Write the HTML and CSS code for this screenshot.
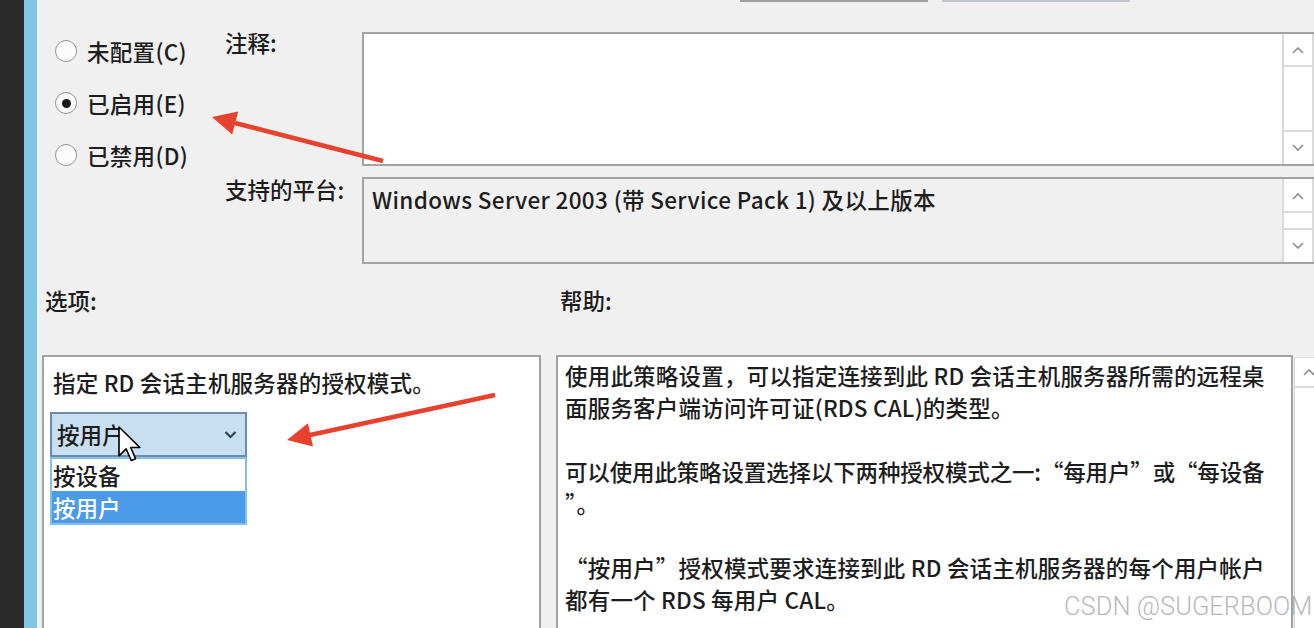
FILE: index.html
```html
<!DOCTYPE html>
<html lang="zh-CN">
<head>
<meta charset="utf-8">
<title>授权模式</title>
<link rel="stylesheet" href="styles.css">
</head>
<body>
<div class="page">
  <div class="edge-dark"></div>
  <div class="edge-blue"></div>
  <main class="dialog">
    <div class="btnbar"><span class="stub stub-a"></span><span class="stub stub-b"></span></div>
    <section class="top">
      <div class="radios">
        <div class="radio"><span class="circle"></span><span class="rlabel">未配置(C)</span></div>
        <div class="radio"><span class="circle on"></span><span class="rlabel">已启用(E)</span></div>
        <div class="radio"><span class="circle"></span><span class="rlabel">已禁用(D)</span></div>
      </div>
      <div class="fields">
        <div class="flabel">注释:</div>
        <div class="box box-comment">
          <div class="box-body"></div>
          <div class="sb sb-comment">
            <div class="sbtn"><svg width="12" height="7" viewBox="0 0 12 7"><polyline points="1,6 6,1 11,6" fill="none" stroke="#8c8c8c" stroke-width="1.6"/></svg></div>
            <div class="track"></div>
            <div class="sbtn"><svg width="12" height="7" viewBox="0 0 12 7"><polyline points="1,1 6,6 11,1" fill="none" stroke="#8c8c8c" stroke-width="1.6"/></svg></div>
          </div>
        </div>
        <div class="flabel flabel-2">支持的平台:</div>
        <div class="box box-platform">
          <div class="box-body ptext">Windows Server 2003 (带 Service Pack 1) 及以上版本</div>
          <div class="sb sb-platform">
            <div class="sbtn"><svg width="12" height="7" viewBox="0 0 12 7"><polyline points="1,6 6,1 11,6" fill="none" stroke="#8c8c8c" stroke-width="1.6"/></svg></div>
            <div class="track"></div>
            <div class="sbtn"><svg width="12" height="7" viewBox="0 0 12 7"><polyline points="1,1 6,6 11,1" fill="none" stroke="#8c8c8c" stroke-width="1.6"/></svg></div>
          </div>
        </div>
      </div>
    </section>
    <section class="bottom">
      <div class="col col-opts">
        <div class="slabel">选项:</div>
        <div class="panel opts">
          <div class="opt-text">指定 RD 会话主机服务器的授权模式。</div>
          <div class="combo"><span>按用户</span><svg width="13" height="9" viewBox="0 0 13 9"><polyline points="1.5,2 6.5,7 11.5,2" fill="none" stroke="#34424f" stroke-width="2.2"/></svg></div>
          <ul class="list">
            <li>按设备</li>
            <li class="sel">按用户</li>
          </ul>
        </div>
      </div>
      <div class="col col-help">
        <div class="slabel">帮助:</div>
        <div class="helpwrap">
          <div class="panel help">
            <p>使用此策略设置，可以指定连接到此 RD 会话主机服务器所需的远程桌</p>
            <p>面服务客户端访问许可证(RDS CAL)的类型。</p>
            <p></p>
            <p class="tight">可以使用此策略设置选择以下两种授权模式之一:“每用户”或“每设备</p>
            <p>”。</p>
            <p></p>
            <p>“按用户”授权模式要求连接到此 RD 会话主机服务器的每个用户帐户</p>
            <p>都有一个 RDS 每用户 CAL。</p>
          </div>
          <div class="hsb">
            <div class="hbtn"><svg width="12" height="7" viewBox="0 0 12 7"><polyline points="1,6 6,1 11,6" fill="none" stroke="#8c8c8c" stroke-width="1.6"/></svg></div>
          </div>
        </div>
      </div>
    </section>
  </main>
  <svg class="overlay" width="1314" height="628" viewBox="0 0 1314 628">
    <line x1="383" y1="161" x2="235" y2="123" stroke="#e8412d" stroke-width="4.5"/>
    <polygon points="212,117 238.2,111.4 232.2,134.6" fill="#e8412d"/>
    <line x1="495" y1="395" x2="310" y2="435" stroke="#e8412d" stroke-width="4.5"/>
    <polygon points="287,440 307.9,423.2 313,446.6" fill="#e8412d"/>
    <g transform="translate(119 427) scale(1.8)">
      <path d="M0 0 L0 16 L4 12.2 L6.8 18.6 L9.2 17.6 L6.5 11.4 L11.6 11.4 Z" fill="#fff" stroke="#000" stroke-width="0.9" stroke-linejoin="round"/>
    </g>
  </svg>
  <div class="watermark">CSDN @SUGERBOOM</div>
</div>
</body>
</html>
```
FILE: styles.css
```css
* { box-sizing: border-box; margin: 0; padding: 0; }
html, body { width: 1314px; height: 628px; overflow: hidden; }
body {
  font-family: "Noto Sans CJK SC", "Noto Sans", sans-serif;
  font-size: 22.5px;
  font-weight: 500;
  color: #1d1d1d;
  background: #f0f0f0;
}
.page { position: relative; display: flex; width: 1314px; height: 628px; overflow: hidden; }
.edge-dark { flex: 0 0 24px; background: #2b2b2b; }
.edge-blue { flex: 0 0 13px; background: #7fc6e4; }
.dialog { flex: 0 0 1300px; background: #f0f0f0; }

.btnbar { display: flex; gap: 14px; padding-left: 703px; height: 2px; }
.stub { width: 188px; height: 2px; }
.stub-a { background: #9f9f9f; }
.stub-b { background: #c3c7cc; }

.top { display: flex; }
.radios { width: 188px; padding-top: 23px; }
.radio { height: 52px; display: flex; align-items: center; gap: 10px; padding-left: 18px; line-height: 24px; }
.rlabel { letter-spacing: 0.3px; }
.circle {
  width: 22px; height: 22px; border: 1.5px solid #939393; border-radius: 50%;
  background: #fcfcfc; display: flex; align-items: center; justify-content: center;
}
.circle.on::after { content: ""; width: 9px; height: 9px; border-radius: 50%; background: #1a1a1a; }

.fields {
  display: grid;
  grid-template-columns: 137px 954px;
  grid-template-rows: 134px 87px;
  row-gap: 11px;
  padding-top: 30px;
}
.flabel { line-height: 20px; }
.flabel-2 { padding-top: 2px; }
.box { border: 2px solid #a3a3a3; display: flex; }
.box-comment { background: #fff; }
.box-platform { background: #f0f0f0; }
.box-body { flex: 1; }
.ptext { padding: 8px 0 0 8px; line-height: 24px; white-space: nowrap; letter-spacing: 0.35px; }

.sb {
  width: 32px; display: flex; flex-direction: column; background: #fff;
  border-left: 2px solid #dadada; border-right: 2px solid #dadada;
}
.sb-comment { padding: 1px 0 2px; }
.sb-platform { padding: 2px 0 2px; }
.sbtn { height: 30px; display: flex; align-items: center; justify-content: center; }
.track { flex: 1; border-top: 2px solid #dadada; border-bottom: 2px solid #dadada; }

.bottom { display: flex; padding-top: 24px; }
.col-opts { margin-left: 5px; width: 499px; flex: 0 0 499px; }
.col-help { margin-left: 15px; flex: 1; }
.slabel { line-height: 24px; height: 67px; }
.col-opts .slabel { padding-left: 3px; }
.col-help .slabel { padding-left: 4px; }

.panel { border: 2px solid #a3a3a3; background: #fff; height: 320px; }
.opts { padding: 13px 0 0 6px; }
.opt-text { padding-left: 3px; line-height: 24px; white-space: nowrap; letter-spacing: 0.2px; }
.combo {
  margin-top: 18px; width: 197px; height: 45px;
  border: 2px solid #6c8cab; background: #c8dff1;
  display: flex; align-items: center; justify-content: space-between;
  padding: 0 8px 0 5px; line-height: 41px;
}
.list { list-style: none; width: 197px; border: 2px solid #86c0e6; }
.list li { height: 32px; line-height: 32px; padding-left: 1px; background: #fff; }
.list li.sel { background: #4c9aea; color: #fff; }

.helpwrap { display: flex; }
.help { flex: 0 0 737px; padding: 2px 0 0 7px; line-height: 32px; }
.help p { height: 32px; white-space: nowrap; letter-spacing: 0.2px; }
.help p.tight { letter-spacing: -0.15px; }
.hsb { flex: 1; height: 320px; margin-left: 1px; margin-top: 2px; border-left: 1px solid #d8d8d8; border-top: 1px solid #dcdcdc; background: #fff; }
.hbtn { height: 30px; border-bottom: 2px solid #dcdcdc; display: flex; align-items: center; padding-left: 8px; }

.overlay { position: absolute; left: 0; top: 0; pointer-events: none; }
.watermark {
  position: absolute; left: 1064px; top: 591px;
  font-family: Roboto, "Liberation Sans", sans-serif; font-weight: 300;
  font-size: 25.5px; line-height: 30px; color: rgba(165, 165, 165, 0.8);
  white-space: nowrap;
}
```
